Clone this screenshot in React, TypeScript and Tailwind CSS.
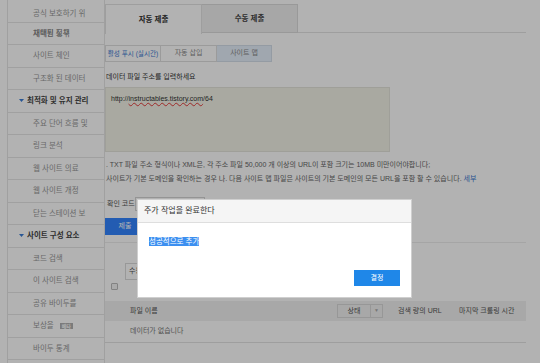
const menu = [
  { t: "공식 보호하기 위" },
  { t: "채택된 정책", ghost: "재매핑 도구" },
  { t: "사이트 체인" },
  { t: "구조화 된 데이터" },
  { t: "최적화 및 유지 관리", head: true },
  { t: "주요 단어 흐름 및" },
  { t: "링크 분석" },
  { t: "웹 사이트 의료" },
  { t: "웹 사이트 개정" },
  { t: "닫는 스테이션 보" },
  { t: "사이트 구성 요소", head: true },
  { t: "코드 검색" },
  { t: "이 사이트 검색" },
  { t: "공유 바이두를" },
  { t: "보상을", badge: "베타" },
  { t: "바이두 통계" },
  { t: "" },
];

function Caret() {
  return (
    <svg width="5" height="3" viewBox="0 0 5 3" className="shrink-0">
      <path d="M0 0h5L2.5 3z" fill="#3a7bd5" />
    </svg>
  );
}

function Sidebar() {
  return (
    <div className="w-[105px] shrink-0 pl-[7px]">
      <div className="h-full border-x border-[#e6e6e6] overflow-hidden">
        {menu.map((m, i) => (
          <div
            key={i}
            className={`h-[22.5px] border-b border-[#e6e6e6] flex items-center whitespace-nowrap overflow-hidden text-[7.5px] ${
              i === 0 ? "pt-[5px]" : ""
            } ${m.head ? "pl-[11px] gap-[3px] font-bold text-[#444]" : "pl-[25px] text-[#959595]"}`}
          >
            {m.head && <Caret />}
            {m.ghost ? (
              <span className="grid">
                <span className="col-start-1 row-start-1 text-[#777]">{m.t}</span>
                <span className="col-start-1 row-start-1 text-[#888]">{m.ghost}</span>
              </span>
            ) : (
              <span>{m.t}</span>
            )}
            {m.badge && (
              <span className="ml-[6px] bg-[#b0b0b0] text-white text-[5px] leading-[6px] px-[2px] font-bold">
                {m.badge}
              </span>
            )}
          </div>
        ))}
      </div>
    </div>
  );
}

function Main() {
  return (
    <div className="flex-1 pr-[14px] pt-[4px] flex flex-col text-[7px]">
      {/* top tabs */}
      <div className="flex h-[30px]">
        <div className="w-[97px] h-full border-x border-t border-[#e2e2e2] bg-white flex items-center justify-center font-bold text-[7.5px] text-[#333]">
          자동 제출
        </div>
        <div className="w-[96px] h-[29px] border-y border-r border-[#dcdcdc] bg-[#f0f0f0] flex items-center justify-center font-bold text-[7.5px] text-[#444]">
          수동 제출
        </div>
        <div className="flex-1 h-[29px] border-b border-[#e2e2e2]" />
      </div>

      {/* sub tabs */}
      <div className="flex mt-[11px] h-[17px]">
        <div className="w-[56px] border border-[#dfdfdf] flex items-center justify-center text-[#3b78d0] text-[6.6px] whitespace-nowrap">
          활성 푸시 (실시간)
        </div>
        <div className="w-[56px] border-y border-r border-[#dfdfdf] flex items-center justify-center text-[#888]">
          자동 삽입
        </div>
        <div className="w-[55px] border-y border-r border-[#d5dfea] bg-[#e6f0fb] flex items-center justify-center text-[#888]">
          사이트 맵
        </div>
      </div>

      <div className="mt-[10px] leading-[10px] pl-[1px] text-[#333]">데이터 파일 주소를 입력하세요</div>

      <div className="mt-[5px] w-[285px] h-[65px] bg-[#f2f3e7] border border-[#e4e4dc] px-[5px] pt-[6px] leading-[10px] text-[#333]">
        http://
        <span className="underline decoration-wavy decoration-[#e23b3b] decoration-[0.7px] underline-offset-[1px]">
          instructables.tistory.com
        </span>
        /64
      </div>

      <div className="mt-[6px] leading-[14px] text-[#666] pl-[1px] whitespace-nowrap">
        <div>. TXT 파일 주소 형식이나 XML은, 각 주소 파일 50,000 개 이상의 URL이 포함 크기는 10MB 미만이어야합니다;</div>
        <div>
          사이트가 기본 도메인을 확인하는 경우 나. 다음 사이트 맵 파일은 사이트의 기본 도메인의 모든 URL을 포함 할 수 있습니다.{" "}
          <span className="text-[#3b78d0]">세부</span>
        </div>
      </div>

      <div className="mt-[11px] flex items-center h-[14px] pl-[2px] text-[#555]">
        <span className="w-[28px]">확인 코드</span>
        <div className="w-[70px] h-full border border-[#d5d5d5] bg-white" />
      </div>

      <div className="pb-[7px] border-b border-[#ececec]">
        <div className="mt-[7px] w-[40px] h-[17px] bg-[#3385ff] text-white flex items-center justify-center">제출</div>
      </div>

      <div className="mt-[20px] ml-[20px] w-[60px] h-[17px] border border-[#dadada] flex items-center pl-[3px] text-[#555]">
        수동 제출
      </div>

      <div className="mt-[3px] ml-[6px] w-[7px] h-[7px] border border-[#bbb] bg-[#f4f4f4] rounded-[1px]" />

      <div className="mt-[11px] h-[20px] bg-[#f1f1f1] flex items-center pl-[25px] text-[#555]">
        <span className="w-[207px]">파일 이름</span>
        <div className="w-[46px] h-[14px] border border-[#d8d8d8] flex">
          <span className="w-[33px] flex items-center justify-center border-r border-[#d8d8d8]">상태</span>
          <span className="flex-1 flex items-center justify-center text-[#aaa] text-[5px]">▼</span>
        </div>
        <span className="ml-[15px] w-[61px]">검색 량의 URL</span>
        <span>마지막 크롤링 시간</span>
      </div>
      <div className="h-[22px] border-b border-[#e2e2e2] flex items-center pl-[25px] text-[#777]">
        데이터가 없습니다
      </div>
    </div>
  );
}

function Modal() {
  return (
    <div className="absolute left-[137px] top-[199px] w-[275px] h-[99px] bg-white border border-[#cfcfcf] flex flex-col">
      <div className="h-[23px] shrink-0 bg-[#f5f5f5] border-b border-[#dedede] flex items-center pl-[6px] text-[8px] text-[#333]">
        주가 작업을 완료한다
      </div>
      <div className="flex-1 pl-[11px] pt-[14px] pr-[11px] pb-[11px] flex flex-col">
        <div className="leading-[10px] text-[7.5px]">
          <span className="bg-[#3c8ff0] text-white">성공적으로 추가</span>
        </div>
        <div className="mt-auto self-end w-[46px] h-[16px] bg-[#1f87e8] text-white text-[7px] flex items-center justify-center">
          결정
        </div>
      </div>
    </div>
  );
}

export default function App() {
  return (
    <div className="relative w-[540px] h-[363px] overflow-hidden bg-white flex font-['Liberation_Sans','Noto_Sans_CJK_KR',sans-serif]">
      <Sidebar />
      <Main />
      <div className="absolute inset-0 bg-black/30" />
      <Modal />
    </div>
  );
}
